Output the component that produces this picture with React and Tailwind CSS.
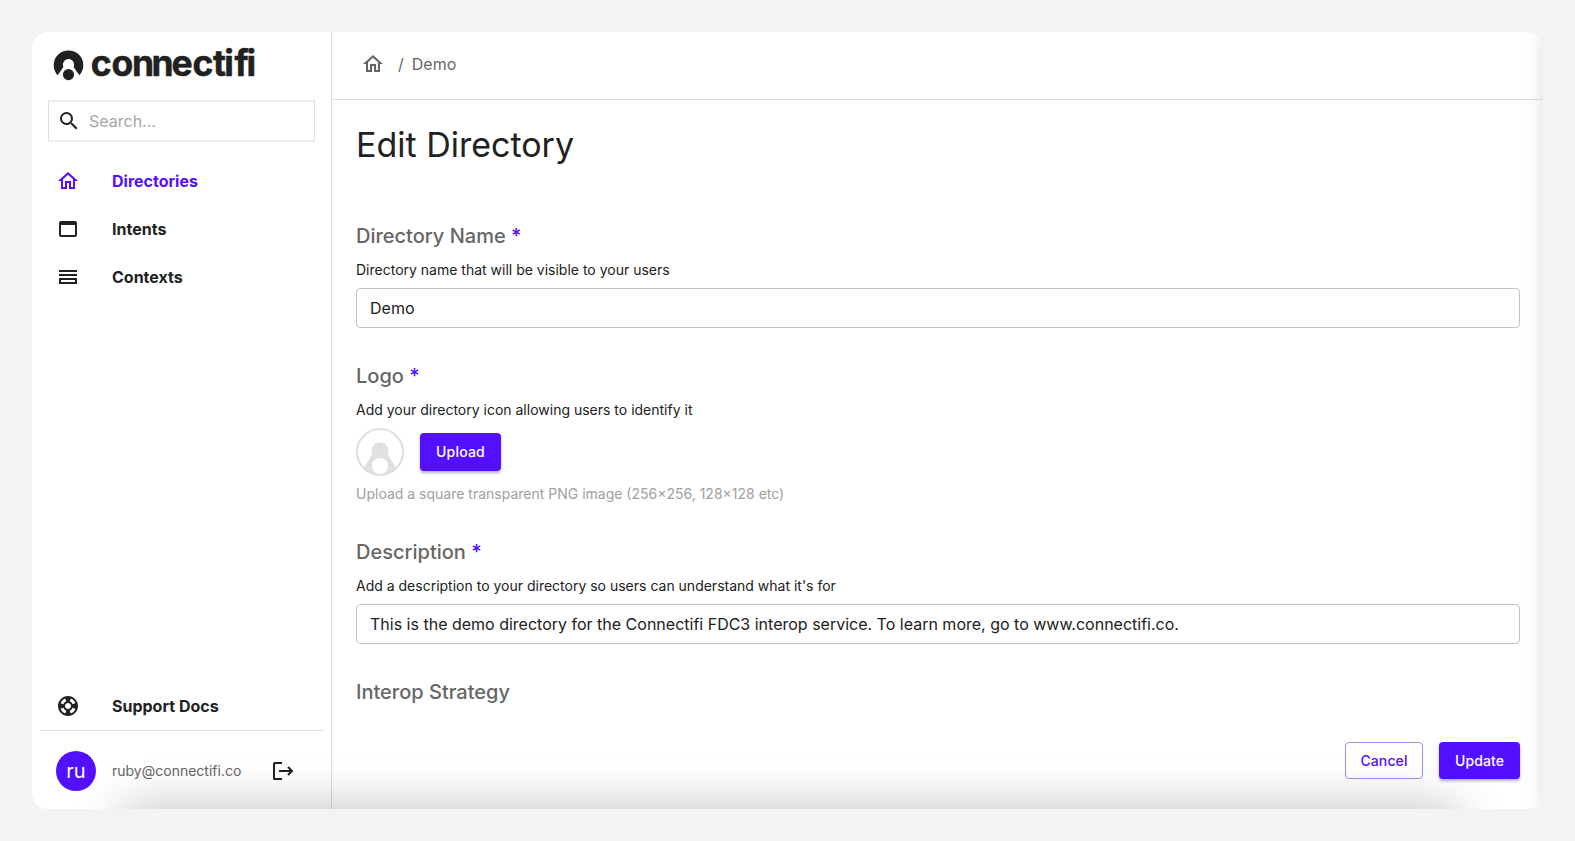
import { MdSearch, MdOutlineHome, MdWebAsset, MdOutlineHorizontalSplit, MdOutlineSupport } from "react-icons/md";

const nav = [
  { label: "Directories", Icon: MdOutlineHome, active: true },
  { label: "Intents", Icon: MdWebAsset },
  { label: "Contexts", Icon: MdOutlineHorizontalSplit },
];

function Wordmark() {
  return (
    <svg width="216" height="52" viewBox="0 -12 216 52" className="block overflow-visible" fill="#212121">
      <path d="M4.6 30.2 A14.8 14.8 0 1 1 26.4 30.2 L20.6 22 A5.6 5.6 0 1 0 10.4 22 Z" />
      <circle cx="15.5" cy="29.6" r="6.2" fill="white" />
      <circle cx="15.5" cy="29.6" r="5.6" />
      <text x="37.8 58.6 79 98.6 118.6 139.6 160 171.2 181.4 193.4" y="31" fontSize="35.5" stroke="#212121" strokeWidth="0.5" className="font-bold" style={{ fontFamily: "Inter, sans-serif", fontVariantLigatures: "none" }}>connectifi</text>
    </svg>
  );
}

function Label({ children, required }) {
  return (
    <h2 className="text-[20px] leading-[32px] font-medium text-[#666]">
      {children}
      {required && <span className="text-[#530fff]"> *</span>}
    </h2>
  );
}

function Hint({ children }) {
  return <p className="mt-2 text-[14px] leading-5">{children}</p>;
}

function Field({ value }) {
  return (
    <div className="mt-2 flex h-10 items-center rounded border border-[#c4c4c4] px-[13px] text-[16px]">
      {value}
    </div>
  );
}

export default function App() {
  return (
    <div className="h-[841px] bg-[#f3f3f3] p-8 text-[#212121]" style={{ fontFamily: "Inter, sans-serif" }}>
      <div className="relative flex h-[777px] w-[1511px] overflow-hidden rounded-2xl bg-white">
        <aside className="flex w-[300px] shrink-0 flex-col border-r border-[#dcdcdc]">
          <div className="ml-[21px] mt-px h-[52px]">
            <Wordmark />
          </div>
          <div className="mx-4 mt-[15px] flex h-[42px] items-center border-x border-y-2 border-x-[#dedede] border-y-[#ececec] pl-2">
            <MdSearch size={24} />
            <span className="ml-2 text-[16px] text-[#a6a6a6]">Search...</span>
          </div>
          <nav className="mt-[15px] flex flex-col">
            {nav.map(({ label, Icon, active }) => (
              <a key={label} className={active ? "flex h-12 items-center pl-6 text-[#530fff]" : "flex h-12 items-center pl-6"}>
                <Icon size={24} />
                <span className="ml-8 text-[16px] font-bold">{label}</span>
              </a>
            ))}
          </nav>
          <div className="mt-auto flex h-12 items-center pl-6">
            <MdOutlineSupport size={24} />
            <span className="ml-8 text-[16px] font-bold">Support Docs</span>
          </div>
          <div className="mx-2 flex h-[79px] items-center border-t border-[#dcdcdc] pl-4 pt-0.5">
            <div className="flex size-10 items-center justify-center rounded-full bg-[#530fff] text-[20px] text-white">ru</div>
            <span className="ml-4 w-[158px] pb-px text-[14px] text-[#666]">ruby@connectifi.co</span>
            <svg width="24" height="24" viewBox="0 0 24 24" fill="none" stroke="#212121" strokeWidth="2">
              <path d="M12 4H4.5a.5.5 0 0 0-.5.5v15a.5.5 0 0 0 .5.5H12M9 12h13M18 8l4 4-4 4" />
            </svg>
          </div>
        </aside>
        <main className="flex min-w-0 flex-1 flex-col">
          <header className="flex h-[68px] shrink-0 items-center border-b border-[#dcdcdc] pb-[3px] pl-[29px] text-[16px] text-[#666]">
            <MdOutlineHome size={24} />
            <span className="ml-[13px]">/</span>
            <span className="ml-2">Demo</span>
          </header>
          <div className="flex flex-1 flex-col pl-6 pr-[23px]">
            <h1 className="mt-6 text-[34px] leading-[42px]">Edit Directory</h1>
            <section className="mt-[54px]">
              <Label required>Directory Name</Label>
              <Hint>Directory name that will be visible to your users</Hint>
              <Field value="Demo" />
            </section>
            <section className="mt-8">
              <Label required>Logo</Label>
              <Hint>Add your directory icon allowing users to identify it</Hint>
              <div className="mt-2 flex h-12 items-center">
                <svg width="48" height="48" viewBox="0 0 48 48">
                  <circle cx="24" cy="24" r="23" fill="white" stroke="#e0e0e0" strokeWidth="2" />
                  <path d="M16.3 26 A8.4 8.4 0 1 1 31.7 26 L40 40 A23 23 0 0 1 8 40 Z" fill="#e0e0e0" />
                  <circle cx="24" cy="38" r="8" fill="white" />
                </svg>
                <button className="ml-4 h-[38px] w-[81px] rounded bg-[#530fff] pb-px text-[14px] font-medium tracking-[0.2px] text-white shadow-[0_2px_3px_rgba(0,0,0,0.3)]">Upload</button>
              </div>
              <p className="mt-2 text-[14px] leading-5 text-[#a0a0a0]">Upload a square transparent PNG image (256×256, 128×128 etc)</p>
            </section>
            <section className="mt-8">
              <Label required>Description</Label>
              <Hint>Add a description to your directory so users can understand what it's for</Hint>
              <Field value="This is the demo directory for the Connectifi FDC3 interop service. To learn more, go to www.connectifi.co." />
            </section>
            <section className="mt-8">
              <Label>Interop Strategy</Label>
            </section>
            <div className="mb-[30px] mt-auto flex justify-end gap-4">
              <button className="h-[37px] w-[78px] rounded border border-[#a987ff] text-[14px] font-medium tracking-[0.1px] text-[#530fff]">Cancel</button>
              <button className="h-[37px] w-[81px] rounded bg-[#530fff] text-[14px] font-medium tracking-[0.1px] text-white shadow-[0_2px_3px_rgba(0,0,0,0.3)]">Update</button>
            </div>
          </div>
        </main>
        <div className="pointer-events-none absolute left-[90px] right-[85px] top-full h-10 shadow-[0_0_50px_rgba(0,0,0,0.28)]" />
        <div className="pointer-events-none absolute inset-y-0 left-full w-10 shadow-[0_0_20px_rgba(0,0,0,0.14)]" />
      </div>
    </div>
  );
}
